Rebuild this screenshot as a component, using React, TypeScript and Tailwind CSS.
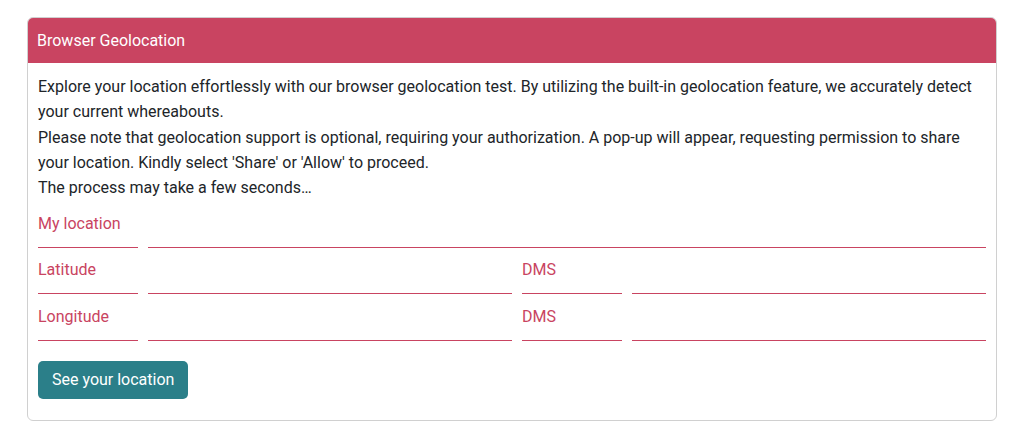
const rose = 'text-[#c94461]';

function Field({ className = '' }: { className?: string }) {
  return <div className={`h-[36px] border-b border-[#c94461] ${className}`} />;
}

function Label({ children }: { children: React.ReactNode }) {
  return (
    <div className={`w-[100px] shrink-0 h-[36px] border-b border-[#c94461] ${rose} text-[16px] leading-[24px]`}>
      {children}
    </div>
  );
}

export default function App() {
  return (
    <div className="min-h-screen bg-white pt-[17px] px-[27px] font-['Roboto',sans-serif]">
      <div className="w-[970px] rounded-[6px] border border-[#d0d0d0] overflow-hidden">
        <div className="h-[45px] bg-[#c94461] flex items-center px-[9px] text-white text-[16px]">
          Browser Geolocation
        </div>
        <div className="px-[10px] pt-[11px] pb-[21px]">
          <p className="text-[16px] leading-[25.3px] text-[#212529]">
            Explore your location effortlessly with our browser geolocation test. By utilizing the built-in geolocation feature, we accurately detect your current whereabouts.
            <br />
            Please note that geolocation support is optional, requiring your authorization. A pop-up will appear, requesting permission to share your location. Kindly select 'Share' or 'Allow' to proceed.
            <br />
            The process may take a few seconds…
          </p>

          <div className="mt-[12px] flex gap-[10px]">
            <Label>My location</Label>
            <Field className="flex-1" />
          </div>
          <div className="mt-[10px] flex gap-[10px]">
            <Label>Latitude</Label>
            <Field className="w-[364px]" />
            <Label>DMS</Label>
            <Field className="flex-1" />
          </div>
          <div className="mt-[11px] flex gap-[10px]">
            <Label>Longitude</Label>
            <Field className="w-[364px]" />
            <Label>DMS</Label>
            <Field className="flex-1" />
          </div>

          <button className="mt-[20px] h-[38px] px-[14px] rounded-[5px] bg-[#2b7f89] text-white text-[16px]">
            See your location
          </button>
        </div>
      </div>
    </div>
  );
}
